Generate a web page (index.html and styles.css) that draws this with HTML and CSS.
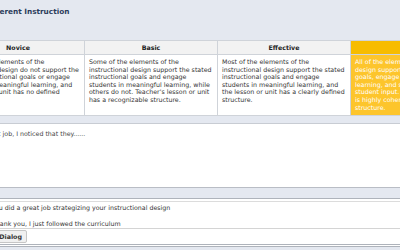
FILE: index.html
```html
<!DOCTYPE html>
<html lang="en">
<head>
  <meta charset="UTF-8">
  <meta name="viewport" content="width=device-width, initial-scale=1.0">
  <title>Coherent Instruction</title>
  <link rel="stylesheet" href="styles.css">
</head>
<body>

  <div class="page">
    <h2 class="title">Coherent Instruction</h2>

    <table class="rubric">
      <colgroup>
        <col class="level">
        <col class="level">
        <col class="level">
        <col class="level wide">
      </colgroup>
      <tr>
        <th>Novice</th>
        <th>Basic</th>
        <th>Effective</th>
        <th class="picked">Highly Effective</th>
      </tr>
      <tr>
        <td>None of the elements of the instructional design do not support the stated instructional goals or engage students in meaningful learning, and the lesson or unit has no defined structure.</td>
        <td>Some of the elements of the instructional design support the stated instructional goals and engage students in meaningful learning, while others do not. Teacher's lesson or unit has a recognizable structure.</td>
        <td>Most of the elements of the instructional design support the stated instructional goals and engage students in meaningful learning, and the lesson or unit has a clearly defined structure.</td>
        <td class="picked">All of the elements of the instructional design support the stated instructional goals, engage students in meaningful learning, and show evidence of student input. Teacher's lesson or unit is highly coherent and has a clear structure.</td>
      </tr>
    </table>

    <div class="note">Great job, I noticed that they......</div>

    <div class="dialog">
      <div class="msg">You did a great job strategizing your instructional design</div>
      <div class="msg reply">Thank you, I just followed the curriculum</div>
      <div class="actions">
        <button class="btn">Close Dialog</button>
      </div>
    </div>
  </div>

</body>
</html>
```

FILE: styles.css
```css
body {
  margin: 0;
  background-color: #e4e8f0;
  font-family: "DejaVu Sans", Verdana, sans-serif;
  font-size: 6.3px;
  color: #333;
  overflow: hidden;
}
.page {
  margin-left: -50px;
  width: 640px;
}
.title {
  margin: 0 0 23px 0;
  padding: 7px 0 0 34px;
  font-size: 7.3px;
  line-height: 10px;
  color: #2c3d5c;
}
.rubric {
  border-collapse: collapse;
  margin-left: 1px;
  table-layout: fixed;
  width: 600px;
}
.rubric col.level {
  width: 133px;
}
.rubric col.wide {
  width: 201px;
}
.rubric th,
.rubric td {
  border: 1px solid #cfd3d9;
}
.rubric th {
  background: #f2f2f2;
  font-size: 6.3px;
  line-height: 9px;
  padding: 2px 4px;
  color: #222;
}
.rubric td {
  background: #fff;
  vertical-align: top;
  line-height: 7.6px;
  padding: 3px 3px 0 4px;
  height: 57px;
}
.rubric th.picked {
  background: #f7bc00;
  color: #fff;
}
.rubric td.picked {
  background: #fdc52c;
  color: #fff;
  padding-right: 72px;
}
.note {
  margin-top: 7px;
  background: #fff;
  border-top: 1px solid #c8ccd3;
  border-bottom: 1px solid #b9bdc5;
  height: 57px;
  padding: 6px 0 0 33px;
  line-height: 8px;
  color: #444;
}
.dialog {
  margin-top: 10px;
  background: #fff;
  border-top: 1px solid #aeb3bb;
  border-bottom: 3px double #aeb3bb;
  padding-top: 2px;
}
.msg {
  border-top: 1px solid #dcdcdc;
  padding: 2px 0 8px 42px;
  line-height: 8px;
  color: #333;
}
.msg.reply {
  border-top: none;
  padding: 0 0 0 42px;
}
.actions {
  border-top: 1px solid #d4d4d4;
  padding: 1px 0 1px 23px;
}
.btn {
  font-family: inherit;
  font-size: 6.3px;
  font-weight: bold;
  height: 13px;
  padding: 0 4px;
  background: #f0f0f0;
  border: 1px solid #c6c6c6;
  border-radius: 2px;
  color: #333;
}
```
